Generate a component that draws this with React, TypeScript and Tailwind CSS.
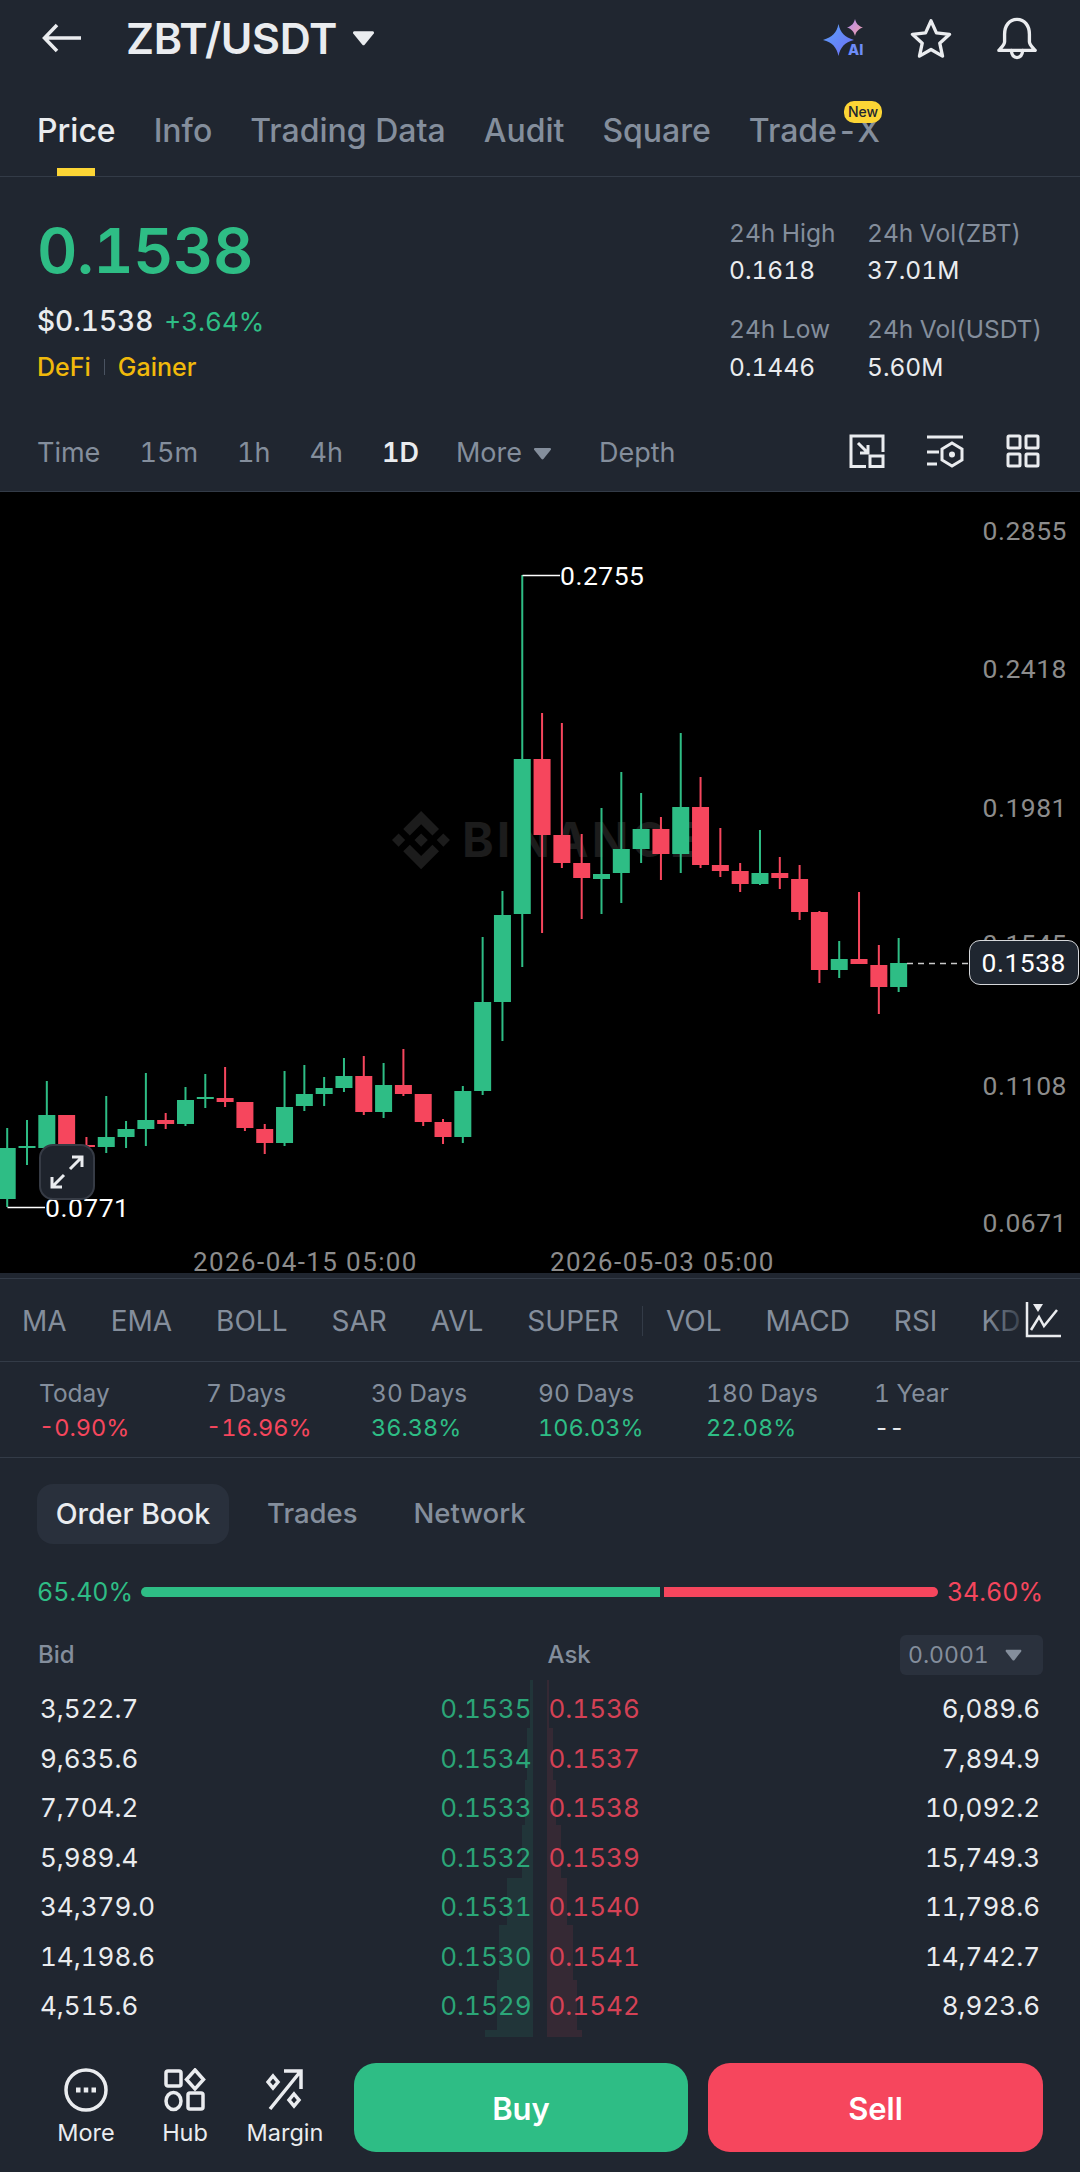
import { Fragment } from 'react'

const tabs = ['Info', 'Trading Data', 'Audit', 'Square', 'Trade-X']
const timeframes = ['Time', '15m', '1h', '4h']
const indicatorsA = ['MA', 'EMA', 'BOLL', 'SAR', 'AVL', 'SUPER']
const indicatorsB = ['VOL', 'MACD', 'RSI', 'KD']

const periods = [
  { label: 'Today', value: '-0.90%', color: 'text-[#f6465d]', x: 'w-[167px]' },
  { label: '7 Days', value: '-16.96%', color: 'text-[#f6465d]', x: 'w-[165px]' },
  { label: '30 Days', value: '36.38%', color: 'text-[#2ebd85]', x: 'w-[167px]' },
  { label: '90 Days', value: '106.03%', color: 'text-[#2ebd85]', x: 'w-[168px]' },
  { label: '180 Days', value: '22.08%', color: 'text-[#2ebd85]', x: 'w-[168px]' },
  { label: '1 Year', value: '--', color: 'text-[#eaecef]', x: 'w-[120px]' },
]

const book = [
  ['3,522.7', '0.1535', '0.1536', '6,089.6'],
  ['9,635.6', '0.1534', '0.1537', '7,894.9'],
  ['7,704.2', '0.1533', '0.1538', '10,092.2'],
  ['5,989.4', '0.1532', '0.1539', '15,749.3'],
  ['34,379.0', '0.1531', '0.1540', '11,798.6'],
  ['14,198.6', '0.1530', '0.1541', '14,742.7'],
  ['4,515.6', '0.1529', '0.1542', '8,923.6'],
]

// depth steps behind the prices: [top, bottom, bid width, ask width]
const depth = [
  [0, 48, 3, 2],
  [48, 100, 6, 6],
  [100, 145, 8, 9],
  [145, 198, 11, 14],
  [198, 245, 26, 20],
  [245, 300, 34, 26],
  [300, 350, 36, 30],
  [350, 357, 48, 35],
]

// colour, wick high, wick low, body top, body bottom (page y)
type Candle = ['g' | 'r', number, number, number, number]
const candles: Candle[] = [
  ['g', 1128, 1207, 1148, 1199],
  ['g', 1120, 1165, 1146, 1148],
  ['g', 1081, 1148, 1115, 1148],
  ['r', 1115, 1148, 1115, 1150],
  ['r', 1137, 1157, 1145, 1147],
  ['g', 1096, 1153, 1137, 1147],
  ['g', 1121, 1148, 1129, 1137],
  ['g', 1073, 1146, 1120, 1129],
  ['r', 1113, 1129, 1120, 1124],
  ['g', 1087, 1126, 1100, 1124],
  ['g', 1074, 1108, 1097, 1099],
  ['r', 1067, 1107, 1098, 1102],
  ['r', 1102, 1131, 1102, 1128],
  ['r', 1124, 1154, 1129, 1143],
  ['g', 1071, 1146, 1107, 1143],
  ['g', 1065, 1111, 1094, 1106],
  ['g', 1077, 1106, 1088, 1094],
  ['g', 1058, 1092, 1076, 1088],
  ['r', 1056, 1115, 1076, 1112],
  ['g', 1063, 1118, 1085, 1112],
  ['r', 1049, 1096, 1085, 1094],
  ['r', 1094, 1126, 1094, 1122],
  ['r', 1119, 1144, 1122, 1137],
  ['g', 1086, 1143, 1091, 1137],
  ['g', 937, 1095, 1002, 1091],
  ['g', 891, 1041, 915, 1002],
  ['g', 575, 967, 759, 914],
  ['r', 713, 933, 759, 835],
  ['r', 723, 868, 835, 863],
  ['r', 834, 919, 863, 878],
  ['g', 808, 914, 874, 879],
  ['g', 772, 903, 849, 873],
  ['g', 793, 863, 829, 849],
  ['r', 817, 880, 829, 854],
  ['g', 733, 873, 807, 854],
  ['r', 777, 868, 807, 865],
  ['r', 828, 877, 865, 871],
  ['r', 863, 892, 871, 884],
  ['g', 830, 885, 873, 884],
  ['r', 857, 889, 873, 878],
  ['r', 865, 920, 879, 912],
  ['r', 911, 983, 912, 970],
  ['g', 941, 978, 959, 970],
  ['r', 892, 964, 959, 964],
  ['r', 945, 1014, 965, 987],
  ['g', 938, 992, 963, 987],
]

const axis: [string, number][] = [
  ['0.2855', 530],
  ['0.2418', 668],
  ['0.1981', 807],
  ['0.1545', 943],
  ['0.1108', 1085],
  ['0.0671', 1222],
]

function Chart() {
  return (
    <div className="relative h-[781px] bg-black">
      <svg className="absolute inset-0 overflow-visible" width="1080" height="781" viewBox="0 492 1080 781">
        <g transform="translate(392 811) scale(0.46)" fill="#1c1c1c">
          <path d="M38.73 53.2l24.59-24.58 24.6 24.6 14.3-14.31L63.32 0 24.42 38.9l14.31 14.3zM0 63.31l14.31-14.31 14.31 14.31-14.31 14.31zM38.73 73.41l24.59 24.59 24.6-24.6 14.31 14.29L63.32 126.61 24.42 87.71l-.02-.02zM97.32 63.31l14.31-14.31 14.31 14.31-14.31 14.31zM77.83 63.3L63.32 48.78 52.59 59.51l-1.24 1.23-2.54 2.54 14.51 14.5 14.51-14.52z" />
        </g>
        <text x="462" y="857" fill="#1c1c1c" fontSize="48" fontWeight="700" fontFamily="Inter" letterSpacing="3">
          BINANCE
        </text>
        {candles.map(([c, hi, lo, top, bottom], i) => {
          const x = 7.2 + 19.81 * i
          const color = c === 'g' ? '#2ebd85' : '#f6465d'
          return (
            <Fragment key={i}>
              <rect x={x - 1} y={hi} width="2" height={lo - hi} fill={color} />
              <rect x={x - 8.5} y={top} width="17" height={Math.max(bottom - top, 2)} fill={color} />
            </Fragment>
          )
        })}
        <path d="M522.5 575.5H560M7.5 1207.5H45" stroke="#fff" strokeWidth="1.5" fill="none" />
        <path d="M907 963.5H971" stroke="#c9c9c9" strokeWidth="1.5" strokeDasharray="6 5" fill="none" />
        <g fontFamily="Roboto" fontSize="26.5">
          <text x="560" y="585" fill="#fff" letterSpacing="0.5">0.2755</text>
          <text x="45" y="1217" fill="#fff" letterSpacing="0.5">0.0771</text>
          {axis.map(([v, y]) => (
            <text key={v} x="1067" y={y + 10} textAnchor="end" fill="#8c8c8c" letterSpacing="0.5">
              {v}
            </text>
          ))}
          <text x="193" y="1271" fill="#8c8c8c" fontSize="26" letterSpacing="1.4">2026-04-15 05:00</text>
          <text x="550" y="1271" fill="#8c8c8c" fontSize="26" letterSpacing="1.4">2026-05-03 05:00</text>
        </g>
      </svg>
      <div className="absolute left-[969px] top-[448px] flex h-[45px] w-[110px] items-center justify-end rounded-[11px] border border-[#d5d7da] bg-[#1f2630] pr-[12px] font-[Roboto,sans-serif] text-[26.5px] tracking-[0.5px] text-white">
        0.1538
      </div>
      <div className="absolute left-[39px] top-[652px] flex h-[56px] w-[56px] items-center justify-center rounded-[14px] border-2 border-[#363b45] bg-[#1e232c]">
        <svg width="36" height="36" viewBox="0 0 36 36" fill="none" stroke="#eaecef" strokeWidth="3">
          <path d="M21 15L33 3M23 3h10v10M15 21L3 33M3 23v10h10" />
        </svg>
      </div>
    </div>
  )
}

function Caret({ className }: { className: string }) {
  return (
    <svg className={className} viewBox="0 0 20 14" fill="currentColor">
      <path d="M2 1h16c1 0 1.500 1 1 2l-8 10c-.500.600-1.500.600-2 0L1 3C.500 2 1 1 2 1z" />
    </svg>
  )
}

export default function App() {
  return (
    <div className="flex h-[2172px] w-[1080px] flex-col overflow-hidden bg-[#202630] font-[Inter,sans-serif] tabular-nums text-[#eaecef]">
      {/* title bar */}
      <div className="flex h-[76px] items-center pl-[42px] pr-[42px]">
        <svg width="39" height="30" viewBox="0 0 39 30" fill="none" stroke="#eaecef" strokeWidth="3.500">
          <path d="M39 15H3M15 2L2.500 15 15 28" />
        </svg>
        <div className="ml-[45px] text-[43px] font-semibold tracking-[-0.4px]">ZBT/USDT</div>
        <Caret className="ml-[15px] h-[16px] w-[23px] text-[#eaecef]" />
        <svg className="ml-auto" width="44" height="40" viewBox="0 0 44 40">
          <defs>
            <linearGradient id="aiBig" x1="0" y1="0" x2="1" y2="1">
              <stop offset="0" stopColor="#5aa2f8" />
              <stop offset="1" stopColor="#6f6cf6" />
            </linearGradient>
            <linearGradient id="aiSmall" x1="0" y1="0" x2="1" y2="1">
              <stop offset="0" stopColor="#b58cf2" />
              <stop offset="1" stopColor="#f0a0a8" />
            </linearGradient>
          </defs>
          <path d="M16.500 6c2 9 6 13 15.500 16-9.500 2.500-13.500 7-15.500 16-2-9-6-13.500-15.500-16C10.500 19 14.500 15 16.500 6z" fill="url(#aiBig)" />
          <path d="M33 1c1 4.500 3.500 7 8 8.500-4.500 1.500-7 4-8 8.500-1-4.500-3.500-7-8-8.500 4.500-1.500 7-4 8-8.500z" fill="url(#aiSmall)" />
          <text x="26" y="37" fontSize="14.500" fontWeight="800" fontFamily="Inter" fill="#6d8cf8">AI</text>
        </svg>
        <svg className="ml-[44px]" width="42" height="40" viewBox="0 0 44 42" fill="none" stroke="#eaecef" strokeWidth="3.500" strokeLinejoin="round">
          <path d="M22 3l5.700 12.600 13.800 1.500-10.300 9.300 2.900 13.600L22 33.100 9.900 40l2.900-13.600L2.500 17.100l13.800-1.500z" />
        </svg>
        <svg className="ml-[44px]" width="42" height="43" viewBox="0 0 44 45" fill="none" stroke="#eaecef" strokeWidth="3.500" strokeLinejoin="round" strokeLinecap="round">
          <path d="M9 18c0-9 5-15.500 13-15.500S35 9 35 18v8c0 3 3 5.500 6 9H3c3-3.500 6-6 6-9z" />
          <path d="M16 35c.5 5 3 7.500 6 7.500s5.500-2.500 6-7.500" />
        </svg>
      </div>

      {/* section tabs */}
      <div className="relative flex h-[101px] gap-[38px] border-b border-[#333b47] pl-[37px] pt-[36px] text-[32px] leading-[38px] text-[#848e9c]">
        <div className="font-medium text-[#eaecef]">Price</div>
        {tabs.map((t) => (
          <div key={t} className="font-medium">{t}</div>
        ))}
        <div className="absolute bottom-0 left-[57px] h-[8px] w-[38px] bg-[#fcd535]" />
        <div className="absolute left-[844px] top-[25px] flex h-[22px] w-[38px] items-center justify-center rounded-[10px] bg-[#fcd535] text-[14px] font-medium text-[#202630]">
          New
        </div>
      </div>

      {/* price summary */}
      <div className="flex h-[229px] pl-[37px]">
        <div className="w-[692px] pt-[38px]">
          <div className="text-[62.5px] font-semibold leading-[70px] tracking-[-0.5px] text-[#2ebd85]">0.1538</div>
          <div className="mt-[19px] flex items-baseline leading-[34px]">
            <span className="text-[28px] font-medium">$0.1538</span>
            <span className="ml-[11px] text-[26px] text-[#2ebd85]">+3.64%</span>
          </div>
          <div className="mt-[13px] flex items-center text-[25px] font-medium leading-[30px] text-[#f0b90b]">
            <span>DeFi</span>
            <span className="mx-[13px] h-[16px] w-px bg-[#4a5361]" />
            <span>Gainer</span>
          </div>
        </div>
        <div className="flex pt-[41px] text-[24.5px] leading-[30px]">
          <div className="w-[138px]">
            <div className="text-[#848e9c]">24h High</div>
            <div className="mt-[7px]">0.1618</div>
            <div className="mt-[29px] text-[#848e9c]">24h Low</div>
            <div className="mt-[8px]">0.1446</div>
          </div>
          <div>
            <div className="text-[#848e9c]">24h Vol(ZBT)</div>
            <div className="mt-[7px]">37.01M</div>
            <div className="mt-[29px] text-[#848e9c]">24h Vol(USDT)</div>
            <div className="mt-[8px]">5.60M</div>
          </div>
        </div>
      </div>

      {/* timeframe bar */}
      <div className="flex h-[86px] items-center border-b border-[#333b47] pl-[37px] pr-[40px] pt-[10px] text-[27px] text-[#848e9c]">
        <div className="flex gap-[39px]">
          {timeframes.map((t) => (
            <span key={t}>{t}</span>
          ))}
          <span className="font-semibold text-[#eaecef]">1D</span>
        </div>
        <span className="ml-[37px]">More</span>
        <Caret className="ml-[11px] h-[13px] w-[19px] text-[#848e9c]" />
        <span className="ml-[47px]">Depth</span>
        <svg className="ml-auto mb-[6px]" width="36" height="34" viewBox="0 0 36 34" fill="none" stroke="#eaecef" strokeWidth="3">
          <path d="M17 32.500H2V2h32v16" />
          <path d="M9 9l10 10M19 11v8h-8" />
          <rect x="21" y="22" width="13" height="10.500" />
        </svg>
        <svg className="ml-[41px] mb-[6px]" width="38" height="34" viewBox="0 0 38 34" fill="none" stroke="#eaecef" strokeWidth="3">
          <path d="M1 3h36M1 18h12M1 30h10" />
          <path d="M26 9l10 6v11l-10 6-10-6V15z" />
          <circle cx="26" cy="20.500" r="3" fill="#eaecef" stroke="none" />
        </svg>
        <svg className="ml-[42px] mb-[6px]" width="34" height="34" viewBox="0 0 34 34" fill="none" stroke="#eaecef" strokeWidth="3">
          <rect x="2" y="2" width="12" height="12" rx="1" />
          <rect x="20" y="2" width="12" height="12" rx="1" />
          <rect x="2" y="20" width="12" height="12" rx="1" />
          <rect x="20" y="20" width="12" height="12" rx="1" />
        </svg>
      </div>

      <Chart />

      {/* indicators */}
      <div className="relative mt-[5px] flex h-[84px] items-center overflow-hidden border-y border-[#333b47] pl-[22px] pt-[2px] text-[28px] text-[#848e9c]">
        <div className="flex shrink-0 gap-[44px]">
          {indicatorsA.map((t) => (
            <span key={t}>{t}</span>
          ))}
        </div>
        <span className="mx-[23px] h-[30px] w-px shrink-0 bg-[#333b47]" />
        <div className="flex shrink-0 gap-[44px]">
          {indicatorsB.map((t) => (
            <span key={t}>{t}</span>
          ))}
        </div>
        <div className="absolute right-0 top-0 flex h-full w-[94px] items-center justify-end bg-gradient-to-r from-transparent via-[#202630] to-[#202630] pr-[19px]">
          <svg width="36" height="36" viewBox="0 0 36 36" fill="none" stroke="#eaecef" strokeWidth="2.500">
            <path d="M2 0v34h34" />
            <path d="M6 28l8-13 5 9 13-16" />
            <path d="M8 2h10l-5 8z" fill="#eaecef" stroke="none" />
          </svg>
        </div>
      </div>

      {/* period changes */}
      <div className="flex h-[96px] items-start border-b border-[#333b47] pl-[39px] pt-[16px] leading-[30px]">
        {periods.map((p) => (
          <div key={p.label} className={p.x}>
            <div className="text-[24.5px] text-[#848e9c]">{p.label}</div>
            <div className={`mt-[5px] text-[23.5px] ${p.color}`}>{p.value}</div>
          </div>
        ))}
      </div>

      {/* order book */}
      <div className="relative flex-1">
        <div className="absolute left-0 right-0 top-[222px]">
          {depth.map(([top, bottom, bid, ask], i) => (
            <Fragment key={i}>
              <div
                className="absolute bg-[#2ebd85]/10"
                style={{ top, height: bottom - top, left: 533 - bid, width: bid }}
              />
              <div
                className="absolute bg-[#f6465d]/10"
                style={{ top, height: bottom - top, left: 547, width: ask }}
              />
            </Fragment>
          ))}
        </div>

        <div className="relative flex items-center pl-[37px] pt-[26px] text-[27.5px] text-[#848e9c]">
          <div className="flex h-[60px] w-[192px] items-center justify-center rounded-[16px] bg-[#29303c] text-[28.5px] font-medium text-[#eaecef]">
            Order Book
          </div>
          <span className="ml-[38px] font-medium">Trades</span>
          <span className="ml-[56px] font-medium">Network</span>
        </div>

        <div className="relative mt-[33px] flex items-center px-[37px] text-[25px] leading-[30px]">
          <span className="w-[104px] text-[#2ebd85]">65.40%</span>
          <div className="h-[10px] w-[519px] rounded-l-full bg-[#2ebd85]" />
          <div className="ml-[4px] h-[10px] w-[274px] rounded-r-full bg-[#f6465d]" />
          <span className="ml-auto text-[#f6465d]">34.60%</span>
        </div>

        <div className="relative mt-[28px] grid grid-cols-2 gap-[14px] pl-[38px] pr-[37px] text-[24px] font-medium text-[#848e9c]">
          <div className="flex h-[40px] items-center">Bid</div>
          <div className="flex h-[40px] items-center justify-between">
            <span>Ask</span>
            <div className="flex h-[40px] w-[143px] items-center rounded-[6px] bg-[#2a313d] pl-[8px] text-[23px] font-normal">
              0.0001
              <Caret className="ml-[15px] h-[12px] w-[19px]" />
            </div>
          </div>
        </div>

        <div className="relative mt-[9px] text-[26px] leading-[49.5px]">
          {book.map(([bidQty, bid, ask, askQty]) => (
            <div key={bid} className="grid grid-cols-2 gap-[17px] pl-[40px] pr-[40px]">
              <div className="flex justify-between">
                <span>{bidQty}</span>
                <span className="text-[#2ebd85]/85">{bid}</span>
              </div>
              <div className="flex justify-between">
                <span className="text-[#f6465d]/85">{ask}</span>
                <span>{askQty}</span>
              </div>
            </div>
          ))}
        </div>
      </div>

      {/* bottom actions */}
      <div className="flex h-[109px] shrink-0 pb-[20px] pl-[37px] pr-[37px] text-[23.5px] leading-[28px]">
        <div className="flex w-[98px] flex-col items-center pt-[5px]">
          <svg width="44" height="44" viewBox="0 0 44 44" fill="none" stroke="#eaecef" strokeWidth="3.500">
            <circle cx="22" cy="22" r="20" />
            <path d="M12 19.500h4.500v5H12zM19.750 19.500h4.500v5h-4.500zM27.500 19.500H32v5h-4.500z" fill="#eaecef" stroke="none" />
          </svg>
          <span className="mt-[7px]">More</span>
        </div>
        <div className="flex w-[100px] flex-col items-center pt-[5px]">
          <svg width="42" height="44" viewBox="0 0 42 44" fill="none" stroke="#eaecef" strokeWidth="3.500">
            <rect x="2" y="3" width="15" height="15" rx="2" />
            <path d="M31 2l8.500 9.500L31 21l-8.500-9.500z" />
            <ellipse cx="9.500" cy="33" rx="7.500" ry="8.500" />
            <rect x="24" y="25" width="15" height="16" rx="2" />
          </svg>
          <span className="mt-[7px]">Hub</span>
        </div>
        <div className="flex w-[100px] flex-col items-center pt-[5px]">
          <svg width="38" height="44" viewBox="0 0 38 44" fill="none" stroke="#eaecef" strokeWidth="3.500">
            <path d="M4 41L34 4M18 3h17v18" />
            <path d="M7 8l5 6-5 6-5-6zM28 26l5 6-5 6-5-6z" />
          </svg>
          <span className="mt-[7px]">Margin</span>
        </div>
        <div className="ml-[19px] flex h-[89px] w-[334px] items-center justify-center rounded-[22px] bg-[#2ebd85] pt-[2px] text-[31px] font-semibold text-white">
          Buy
        </div>
        <div className="ml-[20px] flex h-[89px] w-[335px] items-center justify-center rounded-[22px] bg-[#f6465d] pt-[2px] text-[31px] font-semibold text-white">
          Sell
        </div>
      </div>
    </div>
  )
}
